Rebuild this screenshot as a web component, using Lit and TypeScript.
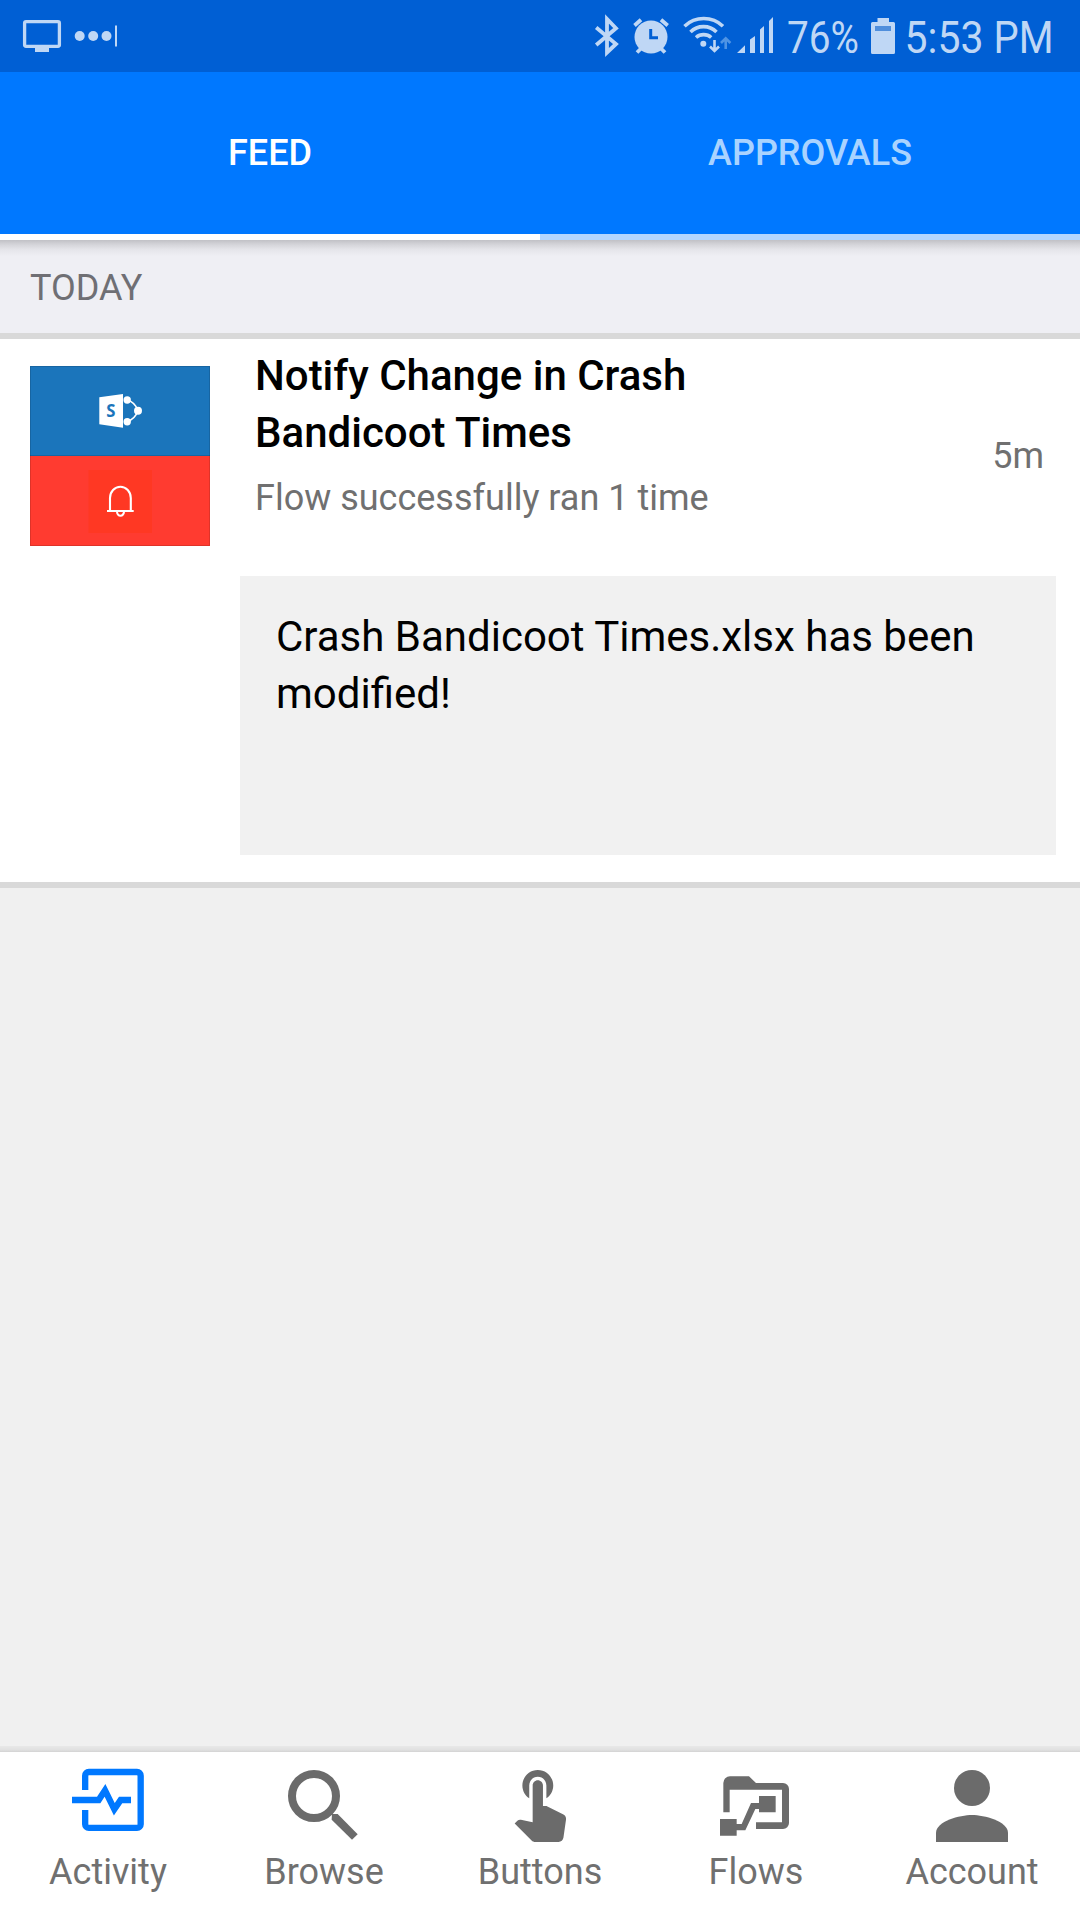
import { LitElement, html, svg, css } from "lit";
import { customElement } from "lit/decorators.js";

const activityIcon = svg`
  <path d="M135.500 150V107a11 11 0 0 1 11-11H291a11 11 0 0 1 11 11V252.500a11 11 0 0 1-11 11H146.500a11 11 0 0 1-11-11V210" fill="none" stroke="currentColor" stroke-width="19"/>
  <path d="M96 180H176L195 151L223 208L242 180H273" fill="none" stroke="currentColor" stroke-width="19"/>`;
const browseIcon = svg`
  <circle cx="822" cy="168" r="66" fill="none" stroke="currentColor" stroke-width="24"/>
  <path d="M876 222H893L953 283L936 299L875 239Z" fill="currentColor"/>`;
const buttonsIcon = svg`
  <path transform="translate(164 90) scale(10.286) translate(-4.75 -3)" fill="currentColor" d="M9 11.24V7.5C9 6.12 10.12 5 11.5 5S14 6.12 14 7.5v3.74c1.21-.81 2-2.18 2-3.74C16 5.01 13.99 3 11.5 3S7 5.010 7 7.5c0 1.560.79 2.930 2 3.740zm9.840 4.630l-4.540-2.260c-.170-.070-.350-.110-.540-.110H13v-6c0-.830-.670-1.500-1.500-1.500S10 6.670 10 7.500v10.740l-3.430-.720c-.080-.010-.150-.030-.240-.030-.310 0-.590.130-.790.330l-.790.800 4.940 4.940c.270.270.650.440 1.060.440h6.790c.750 0 1.330-.550 1.440-1.280l.750-5.270c.010-.070.020-.140.020-.200 0-.620-.380-1.160-.910-1.380z"/>`;
const flowsIcon = svg`
  <path fill="currentColor" d="M790 217V129a20 20 0 0 1 20-20H867L888 129H969a18 18 0 0 1 18 18V249a18 18 0 0 1-18 18H888V247H966V149H809V217Z"/>
  <path fill="currentColor" d="M780 237H830V252H845L873 189H897V168H947V217H897V207H886L856 271H830V287H780Z"/>`;
const accountIcon = svg`
  <circle cx="336" cy="144" r="54" fill="currentColor"/>
  <path fill="currentColor" d="M336 225C300 225 228 243 228 279V306H444V279C444 243 372 225 336 225Z"/>`;

const navItems = [
  { label: "Activity", icon: activityIcon, box: "42 36 324 288", active: true },
  { label: "Browse", icon: browseIcon, box: "690 36 324 288", active: false },
  { label: "Buttons", icon: buttonsIcon, box: "78 36 324 288", active: false },
  { label: "Flows", icon: flowsIcon, box: "726 36 324 288", active: false },
  { label: "Account", icon: accountIcon, box: "174 36 324 288", active: false },
];

@customElement("status-bar")
class StatusBar extends LitElement {
  static styles = css`
    :host { display: flex; justify-content: space-between; height: 72px; background: #005fd4; color: #bfd7f5; }
    svg { display: block; height: 72px; }
    .t { font-family: Roboto, "Liberation Sans", sans-serif; font-size: 45px; fill: currentColor; }
  `;
  render() {
    return html`
      <svg width="130" viewBox="0 0 130 72">
        <rect x="24.600" y="21.700" width="34.800" height="24.600" rx="1.500" fill="none" stroke="currentColor" stroke-width="3.300"/>
        <path d="M35 47H49V52H35Z" fill="currentColor"/>
        <circle cx="79.700" cy="36" r="5" fill="currentColor"/><circle cx="93.200" cy="36" r="5" fill="currentColor"/><circle cx="106.500" cy="36" r="5" fill="currentColor"/>
        <path d="M115 25.500H117V46.500H115Z" fill="currentColor"/>
      </svg>
      <svg width="500" viewBox="580 0 500 72">
        <path d="M596.200 27.500L616 44L607 52.500V19L616 28.300L596.200 45" fill="none" stroke="currentColor" stroke-width="3.800"/>
        <circle cx="651" cy="37" r="16.500" fill="currentColor"/>
        <path d="M634.500 25.500L641 19.800M661 19.800L667.700 25.500M637 52.500L642 47.500M665 52.500L660 47.500" fill="none" stroke="currentColor" stroke-width="3.800"/>
        <path d="M650.700 29V37.700H658" fill="none" stroke="#005fd4" stroke-width="3"/>
        <path d="M684.500 26.200A28 28 0 0 1 723 26.200M690.500 32A18.500 18.500 0 0 1 716.500 32M696 37.500A11.500 11.500 0 0 1 711.200 37.500" fill="none" stroke="currentColor" stroke-width="3.600"/>
        <circle cx="703.300" cy="43.700" r="3" fill="currentColor"/>
        <path d="M714.500 40V51M710 46.500L714.500 51L719 46.500" fill="none" stroke="currentColor" stroke-width="2.600"/>
        <path d="M725.700 49V38.500M721 43L725.700 38.300L730.400 43" fill="none" stroke="#4f94e4" stroke-width="2.600"/>
        <path d="M737 53L745 45.300V53ZM750 53V39.500L755 36V53ZM760 53V29.500L764 26V53ZM769 53V21L773 17V53Z" fill="currentColor"/>
        <text class="t" x="787" y="53" textLength="72" lengthAdjust="spacingAndGlyphs">76%</text>
        <path d="M877.500 22V18H889V22H893.500A1.500 1.500 0 0 1 895 23.500V52.500A1.500 1.500 0 0 1 893.500 54H872.500A1.500 1.500 0 0 1 871 52.500V23.500A1.500 1.500 0 0 1 872.500 22Z" fill="currentColor"/>
        <path d="M875 26H891V31H875Z" fill="#4f8edc"/>
        <text class="t" x="904.500" y="53" textLength="79" lengthAdjust="spacingAndGlyphs">5:53</text>
        <text class="t" x="993.500" y="53" textLength="60" lengthAdjust="spacingAndGlyphs">PM</text>
      </svg>
    `;
  }
}

@customElement("app-root")
class AppRoot extends LitElement {
  static styles = css`
    :host { display: flex; flex-direction: column; width: 1080px; height: 1920px; overflow: hidden; background: #f0f0f0; font-family: Roboto, "Liberation Sans", sans-serif; font-size: 36px; line-height: 42px; color: #707070; }
    * { box-sizing: border-box; }
    svg { display: block; }
    .tabs { display: grid; grid-template-columns: 1fr 1fr; height: 168px; background: #0078ff; font-weight: 500; text-align: center; }
    .tab { padding-top: 60px; color: #a9d3ff; border-bottom: 6px solid #b3d6ff; }
    .tab.active { color: #fff; border-color: #fff; }
    .section { height: 99px; padding: 27px 30px 0; background: linear-gradient(#c1c1c6, #d6d6db 5px, #e6e6eb 10px, #efeff4 16px); border-bottom: 6px solid #d9d9d9; color: #6f6f74; }
    .card { height: 549px; background: #fff; border-bottom: 6px solid #d9d9d9; }
    .summary { display: flex; height: 237px; padding: 9px 36px 0 30px; }
    .tiles { width: 180px; height: 180px; margin: 18px 45px 0 0; }
    .copy { flex: 1; margin-top: -1px; }
    .title { width: 480px; font-size: 42px; line-height: 57px; font-weight: 500; color: #000; }
    .subtitle { margin-top: 16px; }
    .age { margin-top: 87px; }
    .message { width: 816px; height: 279px; margin-left: 240px; padding: 32px 36px; background: #f1f1f1; font-size: 42px; line-height: 57px; color: #000; }
    .nav { display: grid; grid-template-columns: repeat(5, 1fr); height: 174px; padding-top: 6px; margin-top: auto; background: linear-gradient(#e8e8e8, #e0e0e0 4px, #d3d3d3 6px, #fff 6px); }
    .item { display: flex; flex-direction: column; align-items: center; gap: 3px; }
    .item svg { color: #6b6b6b; }
    .item.active svg { color: #0078ff; }
    .logo-letter { font: 700 18px "Open Sans", sans-serif; fill: #1b75bb; }
  `;
  render() {
    return html`
      <status-bar></status-bar>
      <div class="tabs">
        <div class="tab active">FEED</div>
        <div class="tab">APPROVALS</div>
      </div>
      <div class="section">TODAY</div>
      <div class="card">
        <div class="summary">
          <svg class="tiles" viewBox="30 366 180 180">
            <path d="M30 366H210V456H30Z" fill="#1b75bb"/>
            <path d="M30 456H210V546H30Z" fill="#ff3b30"/>
            <path d="M30.500 366.500H209.500V545.500H30.500ZM30 455.500H210" fill="none" stroke="#000" stroke-opacity=".13"/>
            <path d="M88.500 470H152V533H88.500Z" fill="#ff3823"/>
            <path d="M99.300 397.300L123 394V427.700L99.300 424.300Z" fill="#fff"/>
            <text class="logo-letter" x="106.300" y="417.200" textLength="9.200" lengthAdjust="spacingAndGlyphs">S</text>
            <path d="M127 400Q135 402 138 410.700Q135 419 127 421.700" fill="none" stroke="#fff" stroke-width="1.600"/>
            <circle cx="127.200" cy="400" r="3.700" fill="#fff"/><circle cx="138" cy="410.700" r="4" fill="#fff"/><circle cx="127.200" cy="421.700" r="3.700" fill="#fff"/>
            <path d="M107 511H133.700M110 511V498A10.400 11.200 0 0 1 130.800 498V511M117 511.500A3.500 4.200 0 0 0 124 511.500" fill="none" stroke="#fff" stroke-width="2.100"/>
          </svg>
          <div class="copy">
            <div class="title">Notify Change in Crash Bandicoot Times</div>
            <div class="subtitle">Flow successfully ran 1 time</div>
          </div>
          <div class="age">5m</div>
        </div>
        <div class="message">Crash Bandicoot Times.xlsx has been modified!</div>
      </div>
      <div class="nav">
        ${navItems.map((n) => html`
          <div class="item ${n.active ? "active" : ""}">
            <svg width="108" height="96" viewBox=${n.box}>${n.icon}</svg>
            <span>${n.label}</span>
          </div>`)}
      </div>
    `;
  }
}
